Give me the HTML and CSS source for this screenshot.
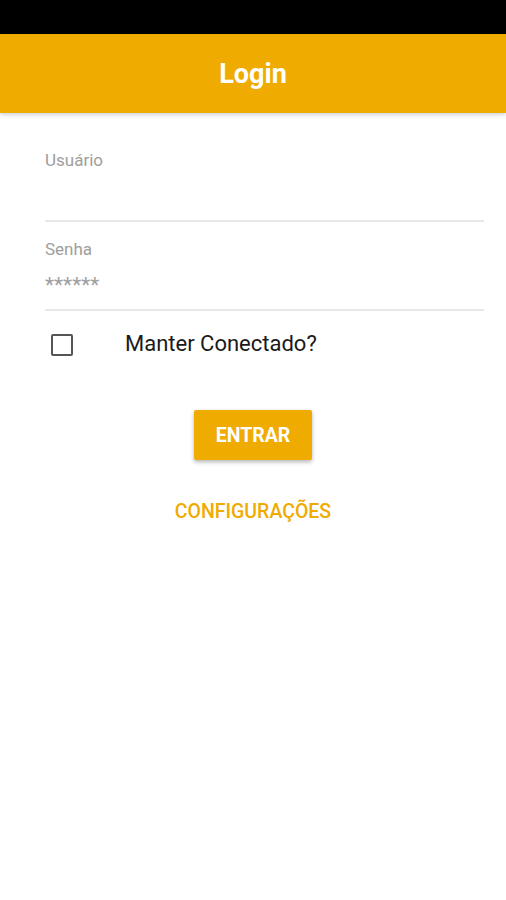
FILE: index.html
```html
<!DOCTYPE html>
<html lang="pt">
<head>
    <meta charset="UTF-8">
    <meta name="viewport" content="width=device-width, initial-scale=1.0">
    <title>Login</title>
    <link rel="stylesheet" href="styles.css">
</head>
<body>
    <div class="status-bar"></div>
    <header class="app-bar">
        <h1>Login</h1>
    </header>

    <main class="form">
        <div class="field">
            <label class="field-label" for="usuario">Usuário</label>
            <input class="field-input" id="usuario" type="text">
        </div>
        <div class="field">
            <label class="field-label" for="senha">Senha</label>
            <input class="field-input pass" id="senha" type="text" placeholder="******">
        </div>

        <label class="keep">
            <span class="check"></span>
            <span class="keep-text">Manter Conectado?</span>
        </label>

        <div class="actions">
            <button class="btn-primary">ENTRAR</button>
            <button class="btn-flat">CONFIGURAÇÕES</button>
        </div>
    </main>
</body>
</html>
```

FILE: styles.css
```css
body {
    margin: 0;
    background-color: #ffffff;
    font-family: Roboto, "Liberation Sans", sans-serif;
}
.status-bar {
    height: 34px;
    background-color: #000000;
}
.app-bar {
    height: 79px;
    background-color: #f0ab00;
    display: flex;
    align-items: center;
    justify-content: center;
    box-shadow: 0 2px 4px rgba(0, 0, 0, 0.18);
    position: relative;
}
.app-bar h1 {
    margin: 0;
    color: #ffffff;
    font-size: 27px;
    font-weight: 700;
}
.form {
    padding: 38px 22px 0 45px;
}
.field {
    display: flex;
    flex-direction: column;
    margin-bottom: 18px;
}
.field-label {
    color: #9e9e9e;
    font-size: 17px;
    line-height: 18px;
}
.field-input {
    border: none;
    border-bottom: 2px solid #e8e8e8;
    outline: none;
    font-family: inherit;
    font-size: 17px;
    padding: 15px 0 14px;
    height: 22px;
    color: #333333;
}
.field-input::placeholder {
    color: #9e9e9e;
}
.pass {
    font-size: 21px;
    padding: 16px 0 13px;
}
.keep {
    display: flex;
    align-items: center;
    margin-top: 23px;
    padding-left: 6px;
}
.check {
    width: 18px;
    height: 18px;
    border: 2px solid #555555;
    border-radius: 2px;
}
.keep-text {
    margin-left: 52px;
    font-size: 22px;
    color: #1a1a1a;
    margin-top: -4px;
}
.actions {
    display: flex;
    flex-direction: column;
    align-items: center;
    margin-left: -45px;
    margin-right: -22px;
    padding-top: 54px;
}
.btn-primary {
    background-color: #f0ab00;
    color: #ffffff;
    border: none;
    border-radius: 2px;
    width: 118px;
    height: 50px;
    font-family: inherit;
    font-size: 19.5px;
    font-weight: 700;
    box-shadow: 0 2px 4px rgba(0, 0, 0, 0.3);
    cursor: pointer;
}
.btn-flat {
    background: none;
    border: none;
    margin-top: 39px;
    color: #f0ab00;
    font-family: inherit;
    font-size: 19.5px;
    font-weight: 500;
    cursor: pointer;
}
```
